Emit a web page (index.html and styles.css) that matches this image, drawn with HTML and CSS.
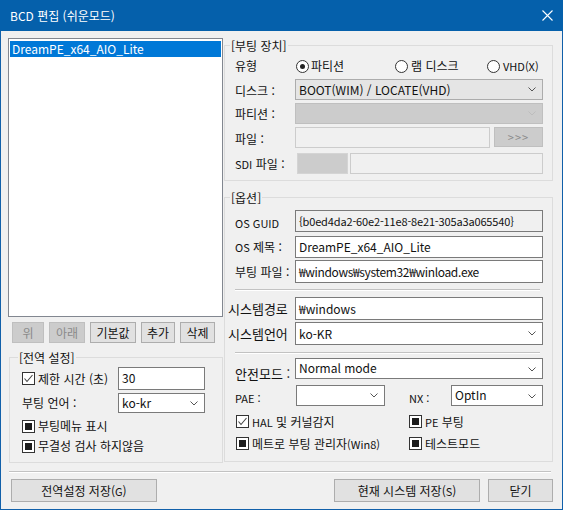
FILE: index.html
```html
<!DOCTYPE html>
<html lang="ko">
<head>
<meta charset="utf-8">
<title>BCD 편집 (쉬운모드)</title>
<link rel="stylesheet" href="styles.css">
</head>
<body>
<div class="window">
  <div class="titlebar">
    <span class="title">BCD 편집 (쉬운모드)</span>
    <svg class="close" width="11" height="11" viewBox="0 0 11 11"><path d="M0.5 0.5L10.5 10.5M10.5 0.5L0.5 10.5" stroke="#fff" stroke-width="1.1" fill="none"/></svg>
  </div>
  <div class="client">
    <div class="main">
      <div class="col-left">
        <div class="listbox">
          <div class="list-item selected">DreamPE_x64_AIO_Lite</div>
        </div>
        <div class="list-buttons">
          <div class="btn disabled w-up">위</div>
          <div class="btn disabled w-down">아래</div>
          <div class="btn w-default">기본값</div>
          <div class="btn w-add">추가</div>
          <div class="btn w-del">삭제</div>
        </div>
        <div class="group group-global">
          <div class="group-title">[전역 설정]</div>
          <div class="grow gr-timeout">
            <div class="check glabel">
              <span class="cb"><svg width="11" height="11" viewBox="0 0 11 11"><path d="M1.5 5.5L4 8.5L9.5 2" stroke="#444" stroke-width="1.1" fill="none"/></svg></span>
              <span>제한 시간 (초)</span>
            </div>
            <div class="textbox top gbox">30</div>
          </div>
          <div class="grow gr-lang">
            <div class="glabel">부팅 언어 :</div>
            <div class="combo white gbox"><span>ko-kr</span><svg class="chev" width="8" height="5" viewBox="0 0 8 5"><path d="M0.5 0.5L4 4L7.5 0.5" stroke="#555" fill="none"/></svg></div>
          </div>
          <div class="grow gr-chk1">
            <div class="check"><span class="cb ind"></span><span>부팅메뉴 표시</span></div>
          </div>
          <div class="grow gr-chk2">
            <div class="check"><span class="cb ind"></span><span>무결성 검사 하지않음</span></div>
          </div>
        </div>
      </div>

      <div class="col-right">
        <div class="group group-boot">
          <div class="group-title">[부팅 장치]</div>
          <div class="row r-type">
            <div class="lbl">유형</div>
            <div class="radios">
              <div class="radio r1"><span class="rb on"></span><span>파티션</span></div>
              <div class="radio r2"><span class="rb"></span><span>램 디스크</span></div>
              <div class="radio r3"><span class="rb"></span><span class="sm">VHD(X)</span></div>
            </div>
          </div>
          <div class="row r-disk">
            <div class="lbl lbl-down">디스크 :</div>
            <div class="combo grey ctl"><span>BOOT(WIM) / LOCATE(VHD)</span><svg class="chev" width="8" height="5" viewBox="0 0 8 5"><path d="M0.5 0.5L4 4L7.5 0.5" stroke="#555" fill="none"/></svg></div>
          </div>
          <div class="row r-part">
            <div class="lbl">파티션 :</div>
            <div class="combo off ctl"><span></span><svg class="chev" width="8" height="5" viewBox="0 0 8 5"><path d="M0.5 0.5L4 4L7.5 0.5" stroke="#bdbdbd" fill="none"/></svg></div>
          </div>
          <div class="row r-file">
            <div class="lbl lbl-down">파일 :</div>
            <div class="textbox off file-box"></div>
            <div class="btn disabled file-btn">&gt;&gt;&gt;</div>
          </div>
          <div class="row r-sdi">
            <div class="lbl"><span class="sm">SDI</span> 파일 :</div>
            <div class="sdi-tag"></div>
            <div class="textbox off sdi-box"></div>
          </div>
        </div>

        <div class="group group-opt">
          <div class="group-title">[옵션]</div>
          <div class="row r-guid">
            <div class="lbl lbl-down"><span class="sm">OS GUID</span></div>
            <div class="textbox ro ctl narrow">{b0ed4da2-60e2-11e8-8e21-305a3a065540}</div>
          </div>
          <div class="row r-name">
            <div class="lbl"><span class="sm">OS</span> 제목 :</div>
            <div class="textbox ctl">DreamPE_x64_AIO_Lite</div>
          </div>
          <div class="row r-bootfile">
            <div class="lbl">부팅 파일 :</div>
            <div class="textbox ctl tight">₩windows₩system32₩winload.exe</div>
          </div>
          <div class="hsep opt-sep1"></div>
          <div class="row r-syspath">
            <div class="lbl big lbl-wide">시스템경로</div>
            <div class="textbox ctl">₩windows</div>
          </div>
          <div class="row r-syslang">
            <div class="lbl big lbl-wide">시스템언어</div>
            <div class="combo white ctl"><span>ko-KR</span><svg class="chev" width="8" height="5" viewBox="0 0 8 5"><path d="M0.5 0.5L4 4L7.5 0.5" stroke="#555" fill="none"/></svg></div>
          </div>
          <div class="hsep opt-sep2"></div>
          <div class="row r-safe">
            <div class="lbl big lbl-safe">안전모드 :</div>
            <div class="combo white ctl top"><span>Normal mode</span><svg class="chev" width="8" height="5" viewBox="0 0 8 5"><path d="M0.5 0.5L4 4L7.5 0.5" stroke="#555" fill="none"/></svg></div>
          </div>
          <div class="row r-pae">
            <div class="lbl lbl-pae"><span class="sm">PAE :</span></div>
            <div class="combo white pae-box"><span></span><svg class="chev" width="8" height="5" viewBox="0 0 8 5"><path d="M0.5 0.5L4 4L7.5 0.5" stroke="#555" fill="none"/></svg></div>
            <div class="lbl lbl-pae nx-lbl"><span class="sm">NX :</span></div>
            <div class="combo white top nx-box"><span>OptIn</span><svg class="chev" width="8" height="5" viewBox="0 0 8 5"><path d="M0.5 0.5L4 4L7.5 0.5" stroke="#555" fill="none"/></svg></div>
          </div>
          <div class="row r-chk1">
            <div class="check c-left">
              <span class="cb"><svg width="11" height="11" viewBox="0 0 11 11"><path d="M1.5 5.5L4 8.5L9.5 2" stroke="#444" stroke-width="1.1" fill="none"/></svg></span>
              <span><span class="sm">HAL</span> 및 커널감지</span>
            </div>
            <div class="check"><span class="cb ind"></span><span><span class="sm">PE</span> 부팅</span></div>
          </div>
          <div class="row r-chk2">
            <div class="check c-left"><span class="cb ind"></span><span>메트로 부팅 관리자<span class="sm">(Win8)</span></span></div>
            <div class="check"><span class="cb ind"></span><span>테스트모드</span></div>
          </div>
        </div>
      </div>
    </div>

    <div class="hsep footer-sep"></div>
    <div class="footer">
      <div class="btn fbtn-global">전역설정 저장(<span class="sm">G</span>)</div>
      <div class="spacer"></div>
      <div class="btn fbtn-save">현재 시스템 저장(<span class="sm">S</span>)</div>
      <div class="btn fbtn-close">닫기</div>
    </div>
  </div>
</div>
</body>
</html>
```

FILE: styles.css
```css
* { box-sizing: border-box; }
html, body { margin: 0; padding: 0; }
body {
  width: 563px;
  height: 510px;
  overflow: hidden;
  font-family: "Noto Sans CJK KR", "Noto Sans", sans-serif;
  font-size: 12px;
  line-height: 16px;
  color: #111;
  background: #f0f0f0;
}

.window {
  width: 563px;
  height: 510px;
  border: 1px solid #1160aa;
  border-top: 0;
  background: #f0f0f0;
  display: flex;
  flex-direction: column;
}

.titlebar {
  height: 31px;
  margin: 0 -1px;
  background: #0560ab;
  color: #fff;
  display: flex;
  align-items: center;
  justify-content: space-between;
  padding: 0 10px 0 10px;
  flex: none;
}
.title { font-size: 12px; line-height: 16px; }
.close { display: block; }

.client {
  flex: 1;
  padding: 0 9px 0 7px;
}

.main { display: flex; gap: 1px; }
.col-left { width: 215px; flex: none; }
.col-right { width: 329px; flex: none; }

/* list */
.listbox {
  margin-top: 7px;
  height: 279px;
  border: 1px solid #828790;
  background: #fff;
  padding: 2px 1px;
}
.list-item { height: 16px; line-height: 16px; padding-left: 2px; }
.list-item.selected { background: #0078d7; color: #fff; }

.list-buttons {
  margin-top: 5px;
  height: 21px;
  display: flex;
  gap: 5px;
  padding-left: 4px;
}

/* buttons */
.btn {
  height: 21px;
  border: 1px solid #adadad;
  background: #e1e1e1;
  display: flex;
  align-items: center;
  justify-content: center;
  white-space: nowrap;
}
.btn.disabled { background: #cccccc; border-color: #bfbfbf; color: #8a8a8a; }
.w-up { width: 32px; }
.w-down { width: 36px; }
.w-default { width: 46px; }
.w-add { width: 34px; }
.w-del { width: 35px; }

/* groups */
.group { border: 1px solid #dcdcdc; }
.group-title {
  width: max-content;
  height: 15px;
  line-height: 15px;
  margin-top: -8px;
  padding: 0 1px;
  background: #f0f0f0;
}

.group-global {
  margin: 14px 0 0 1px;
  width: 214px;
  padding: 0 16px 9px 12px;
}
.group-global .group-title { margin-left: -4px; }
.grow { display: flex; align-items: center; }
.glabel { width: 96px; flex: none; }
.gbox { width: 87px; }
.gr-timeout { margin-top: 2px; height: 23px; }
.gr-timeout .gbox { height: 23px; }
.gr-lang { margin-top: 3px; height: 20px; }
.gr-lang .gbox { height: 20px; }
.gr-chk1 { margin-top: 6px; height: 14px; }
.gr-chk2 { margin-top: 6px; height: 14px; }

.group-boot {
  margin-top: 14px;
  padding: 0 9px 6px 10px;
}
.group-opt {
  margin-top: 16px;
  padding: 0 9px 10px 10px;
}
.group-boot .group-title,
.group-opt .group-title { margin-left: -5px; }

.row { display: flex; align-items: center; }
.lbl { width: 60px; flex: none; white-space: nowrap; }
.lbl-down { padding-top: 3px; }
.ctl { width: 248px; }

.r-type { margin-top: 3px; height: 20px; }
.r-disk { margin-top: 3px; height: 21px; }
.r-part { margin-top: 3px; height: 21px; }
.r-file { margin-top: 3px; height: 21px; }
.r-sdi { margin-top: 5px; height: 21px; }
.r-disk .ctl, .r-part .ctl { height: 21px; }

.radios { display: flex; align-items: center; }
.radio { display: flex; align-items: center; gap: 2px; }
.r1 { margin-left: 1px; width: 99px; }
.r2 { width: 92px; gap: 3px; }
.r3 { gap: 3px; }
.rb {
  width: 13px; height: 13px;
  border: 1px solid #333;
  border-radius: 50%;
  background: #fff;
  display: flex; align-items: center; justify-content: center;
  flex: none;
}
.rb.on::after {
  content: "";
  width: 5px; height: 5px;
  border-radius: 50%;
  background: #222;
}

.file-box { width: 195px; height: 21px; }
.file-btn { width: 49px; height: 20px; margin-left: 4px; align-self: flex-start; font-size: 11px; letter-spacing: 1px; }
.sdi-tag { width: 51px; height: 21px; margin-left: 2px; background: #cccccc; border: 1px solid #d4d4d4; }
.sdi-box { width: 193px; height: 21px; margin-left: 2px; }

.r-guid { margin-top: 5px; height: 22px; }
.r-name { margin-top: 4px; height: 22px; }
.r-bootfile { margin-top: 2px; height: 23px; }
.r-syspath { margin-top: 6px; height: 23px; }
.r-syslang { margin-top: 2px; height: 23px; }
.r-safe { margin-top: 4px; height: 21px; }
.r-pae { margin-top: 6px; height: 21px; }
.r-chk1 { margin-top: 8px; height: 15px; }
.r-chk2 { margin-top: 7px; height: 15px; }
.row .ctl { height: 100%; }

.lbl-wide { margin-left: -7px; width: 67px; }
.lbl-safe { align-self: flex-start; margin-top: 8px; }
.lbl-pae { padding-top: 5px; }
.pae-box { width: 89px; height: 21px; margin-left: 1px; }
.nx-lbl { width: 42px; margin-left: 24px; }
.nx-box { width: 92px; height: 21px; }
.big { font-size: 13px; }
.sm { font-size: 11px; }
.narrow { font-size: 11px; letter-spacing: -0.15px; }
.tight { letter-spacing: -0.35px; }

/* controls */
.textbox {
  border: 1px solid #7a7a7a;
  background: #fff;
  padding: 0 3px;
  display: flex;
  align-items: center;
  white-space: nowrap;
  overflow: hidden;
}
.textbox.top { align-items: flex-start; padding-top: 2px; }
.textbox.ro { background: #f0f0f0; }
.textbox.off { background: #f0f0f0; border-color: #cccccc; }

.combo {
  border: 1px solid #7a7a7a;
  background: #fff;
  display: flex;
  align-items: center;
  justify-content: space-between;
  padding: 0 6px 0 3px;
  white-space: nowrap;
}
.combo.top { align-items: flex-start; padding-top: 1px; }
.combo.top .chev { margin-top: 7px; }
.combo.grey { background: #e5e5e5; border-color: #acacac; }
.combo.off { background: #cccccc; border-color: #bfbfbf; }
.chev { display: block; flex: none; }

/* checkboxes */
.check { display: flex; align-items: center; gap: 3px; white-space: nowrap; }
.c-left { margin-left: 1px; width: 173px; }
.cb {
  width: 13px; height: 13px;
  border: 1px solid #333;
  background: #fff;
  display: flex; align-items: center; justify-content: center;
  flex: none;
}
.cb svg { display: block; }
.cb.ind::after {
  content: "";
  width: 7px; height: 7px;
  background: #1c1c1c;
}

/* separators */
.hsep { height: 2px; border-top: 1px solid #c2c2c2; border-bottom: 1px solid #ffffff; }
.opt-sep1 { margin: 6px 3px 0 0; }
.opt-sep2 { margin: 7px 3px 0 0; }
.footer-sep { margin: 8px 2px 0 1px; }

.footer {
  margin-top: 6px;
  display: flex;
  height: 23px;
}
.footer .btn { height: 23px; }
.spacer { flex: 1; }
.fbtn-global { width: 146px; margin-left: 3px; }
.fbtn-save { width: 146px; }
.fbtn-close { width: 65px; margin-left: 8px; }
```
